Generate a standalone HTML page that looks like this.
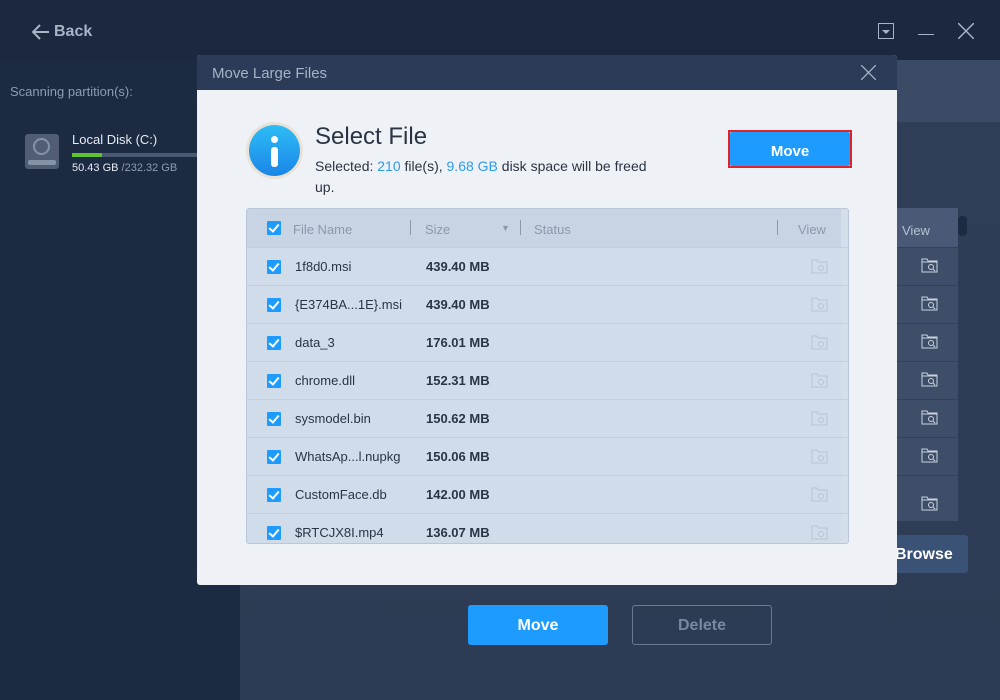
<!DOCTYPE html>
<html><head><meta charset="utf-8"><style>
*{margin:0;padding:0;box-sizing:border-box}
body{width:1000px;height:700px;overflow:hidden;background:#2e3c55;font-family:"Liberation Sans",sans-serif;position:relative}
.abs{position:absolute}
.top{left:0;top:0;width:1000px;height:60px;background:#1b2840}
.side{left:0;top:60px;width:240px;height:640px;background:#1c2a42}
.main{left:240px;top:60px;width:760px;height:640px;background:linear-gradient(#3b4a65 0,#3b4a65 62px,#2f3d57 62px,#2d3b54 100%)}
.t{white-space:nowrap}
.row{position:absolute;left:0;width:603px;height:38px;border-top:1px solid #c4d0df}
.cb{position:absolute;left:20px;top:12px;width:14px;height:14px;background:#1e9bff;border-radius:1px}
.cb:after{content:"";position:absolute;left:4px;top:1px;width:4px;height:8px;border:solid #fff;border-width:0 2px 2px 0;transform:rotate(40deg)}
.fn{position:absolute;left:48px;top:11px;font-size:13px;color:#2b3442}
.sz{position:absolute;left:179px;top:11px;font-size:13px;color:#2b3442;font-weight:bold}
.vi{position:absolute;left:564px;top:11px}
.rr{position:absolute;left:897px;width:61px;height:38px;border-top:1px solid #33425c;background:#3e4e69}
.rr svg{position:absolute;left:24px;top:10px}
</style></head><body>
<div class="abs top"></div>
<div class="abs side"></div>
<div class="abs main"></div>
<svg class="abs" style="left:32px;top:24px" width="18" height="16" viewBox="0 0 18 16"><path d="M17 8H2M8 1L1 8l7 7" fill="none" stroke="#a7b3c6" stroke-width="2"/></svg>
<div class="abs t" style="left:54px;top:23px;font-size:16px;font-weight:bold;color:#a7b3c6">Back</div>
<div class="abs" style="left:878px;top:23px;width:16px;height:16px;border:1px solid #a7b3c6"></div>
<div class="abs" style="left:882px;top:30px;border:4px solid transparent;border-top:4px solid #a7b3c6"></div>
<div class="abs" style="left:918px;top:34px;width:16px;height:1px;background:#a7b3c6"></div>
<svg class="abs" style="left:958px;top:23px" width="16" height="16"><path d="M0 0L16 16M16 0L0 16" stroke="#a7b3c6" stroke-width="1.5"/></svg>
<div class="abs t" style="left:10px;top:84px;font-size:13px;color:#8f9cb1">Scanning partition(s):</div>
<div class="abs" style="left:25px;top:134px;width:34px;height:35px;background:#505d74;border-radius:3px"></div>
<div class="abs" style="left:33px;top:138px;width:17px;height:17px;border:2px solid #8593a8;border-radius:50%"></div>
<div class="abs" style="left:28px;top:160px;width:28px;height:5px;background:#8593a8;border-radius:2px"></div>
<div class="abs t" style="left:72px;top:132px;font-size:13px;color:#e6ebf2">Local Disk (C:)</div>
<div class="abs" style="left:72px;top:153px;width:126px;height:4px;background:#4b5872"></div>
<div class="abs" style="left:72px;top:153px;width:30px;height:4px;background:#5fc32f"></div>
<div class="abs t" style="left:72px;top:162px;font-size:11px;color:#e6ebf2">50.43 GB <span style="color:#8f9cb1">/232.32 GB</span></div>

<div class="abs" style="left:897px;top:208px;width:61px;height:39px;background:#4a5a76"></div>
<div class="abs t" style="left:902px;top:223px;font-size:13px;color:#b6c2d4">View</div>
<div class="abs" style="left:958px;top:216px;width:9px;height:20px;background:#1c2a42;border-radius:4px"></div>
<div class="rr" style="top:247px"><svg width="17" height="15"><path d="M1 1h5l1 2h9v11H1z M1 4h15" fill="none" stroke="#c9d3e0"/><circle cx="10" cy="9" r="2.5" fill="none" stroke="#c9d3e0"/><path d="M12 11l2 2" stroke="#c9d3e0"/></svg></div>
<div class="rr" style="top:285px"><svg width="17" height="15"><path d="M1 1h5l1 2h9v11H1z M1 4h15" fill="none" stroke="#c9d3e0"/><circle cx="10" cy="9" r="2.5" fill="none" stroke="#c9d3e0"/><path d="M12 11l2 2" stroke="#c9d3e0"/></svg></div>
<div class="rr" style="top:323px"><svg width="17" height="15"><path d="M1 1h5l1 2h9v11H1z M1 4h15" fill="none" stroke="#c9d3e0"/><circle cx="10" cy="9" r="2.5" fill="none" stroke="#c9d3e0"/><path d="M12 11l2 2" stroke="#c9d3e0"/></svg></div>
<div class="rr" style="top:361px"><svg width="17" height="15"><path d="M1 1h5l1 2h9v11H1z M1 4h15" fill="none" stroke="#c9d3e0"/><circle cx="10" cy="9" r="2.5" fill="none" stroke="#c9d3e0"/><path d="M12 11l2 2" stroke="#c9d3e0"/></svg></div>
<div class="rr" style="top:399px"><svg width="17" height="15"><path d="M1 1h5l1 2h9v11H1z M1 4h15" fill="none" stroke="#c9d3e0"/><circle cx="10" cy="9" r="2.5" fill="none" stroke="#c9d3e0"/><path d="M12 11l2 2" stroke="#c9d3e0"/></svg></div>
<div class="rr" style="top:437px"><svg width="17" height="15"><path d="M1 1h5l1 2h9v11H1z M1 4h15" fill="none" stroke="#c9d3e0"/><circle cx="10" cy="9" r="2.5" fill="none" stroke="#c9d3e0"/><path d="M12 11l2 2" stroke="#c9d3e0"/></svg></div>
<div class="rr" style="top:475px;height:46px"><svg width="17" height="15" style="top:20px"><path d="M1 1h5l1 2h9v11H1z M1 4h15" fill="none" stroke="#c9d3e0"/><circle cx="10" cy="9" r="2.5" fill="none" stroke="#c9d3e0"/><path d="M12 11l2 2" stroke="#c9d3e0"/></svg></div>
<div class="abs t" style="left:880px;top:535px;width:88px;height:38px;background:#3a5275;border-radius:3px;color:#fff;font-size:16px;font-weight:bold;padding:11px 0 0 15px">Browse</div>
<div class="abs t" style="left:468px;top:605px;width:140px;height:40px;background:#1e9bff;border-radius:3px;color:#fff;font-size:16px;font-weight:bold;text-align:center;padding-top:12px">Move</div>
<div class="abs t" style="left:632px;top:605px;width:140px;height:40px;border:1px solid #6a7a94;border-radius:3px;color:#7888a2;font-size:16px;font-weight:bold;text-align:center;padding-top:11px">Delete</div>

<div class="abs" style="left:197px;top:55px;width:700px;height:530px;background:#eef1f6;border-radius:3px;overflow:hidden">
 <div class="abs" style="left:0;top:0;width:700px;height:35px;background:#2b3b58"></div>
 <div class="abs t" style="left:15px;top:10px;font-size:15px;color:#a7b3c6">Move Large Files</div>
 <svg class="abs" style="left:664px;top:10px" width="15" height="15"><path d="M0 0L15 15M15 0L0 15" stroke="#a7b3c6" stroke-width="1.3"/></svg>
 <div class="abs" style="left:49px;top:67px;width:57px;height:57px;border-radius:50%;background:#e8e2d8"></div>
 <div class="abs" style="left:52px;top:70px;width:51px;height:51px;border-radius:50%;background:linear-gradient(#2fbdf5,#1a85e8)"></div>
 <div class="abs" style="left:74px;top:81px;width:7px;height:7px;border-radius:50%;background:#fff"></div>
 <div class="abs" style="left:74px;top:92px;width:7px;height:20px;border-radius:3px;background:#fff"></div>
 <div class="abs t" style="left:118px;top:68px;font-size:24px;color:#2b3442">Select File</div>
 <div class="abs t" style="left:118px;top:101px;font-size:14px;color:#2b3442;line-height:21px">Selected: <span style="color:#2e9bf0">210</span> file(s), <span style="color:#2e9bf0">9.68 GB</span> disk space will be freed<br>up.</div>
 <div class="abs" style="left:531px;top:75px;width:124px;height:38px;border:2px solid #e0232b"></div>
 <div class="abs t" style="left:533px;top:77px;width:120px;height:34px;background:#1e9bff;border-radius:2px;color:#fff;font-size:15px;font-weight:bold;text-align:center;padding-top:11px">Move</div>
 <div class="abs" style="left:49px;top:153px;width:603px;height:336px;background:#d0dcea;border:1px solid #b9c7d8;border-radius:3px;overflow:hidden">
  <div class="abs" style="left:0;top:0;width:603px;height:38px;background:#c8d4e3"></div>
  <div class="cb" style="top:12px"></div>
  <div class="abs t" style="left:46px;top:13px;font-size:13px;color:#8b99ad">File Name</div>
  <div class="abs" style="left:163px;top:11px;width:1px;height:15px;background:#8b99ad"></div>
  <div class="abs t" style="left:178px;top:13px;font-size:13px;color:#8b99ad">Size</div>
  <div class="abs t" style="left:254px;top:14px;font-size:9px;color:#8b99ad">&#9660;</div>
  <div class="abs" style="left:273px;top:11px;width:1px;height:15px;background:#8b99ad"></div>
  <div class="abs t" style="left:287px;top:13px;font-size:13px;color:#8b99ad">Status</div>
  <div class="abs" style="left:530px;top:11px;width:1px;height:15px;background:#8b99ad"></div>
  <div class="abs t" style="left:551px;top:13px;font-size:13px;color:#8b99ad">View</div>
  <div class="abs" style="left:594px;top:0;width:9px;height:336px;background:#d5dfeb"></div>
  <div class="row" style="top:38px"><div class="cb"></div><div class="fn">1f8d0.msi</div><div class="sz">439.40 MB</div><svg class="vi" width="17" height="15"><path d="M1 1h5l1 2h9v11H1z" fill="none" stroke="#b6c3d3"/><circle cx="10" cy="9" r="2.5" fill="none" stroke="#b6c3d3"/></svg></div>
  <div class="row" style="top:76px"><div class="cb"></div><div class="fn">{E374BA...1E}.msi</div><div class="sz">439.40 MB</div><svg class="vi" width="17" height="15"><path d="M1 1h5l1 2h9v11H1z" fill="none" stroke="#b6c3d3"/><circle cx="10" cy="9" r="2.5" fill="none" stroke="#b6c3d3"/></svg></div>
  <div class="row" style="top:114px"><div class="cb"></div><div class="fn">data_3</div><div class="sz">176.01 MB</div><svg class="vi" width="17" height="15"><path d="M1 1h5l1 2h9v11H1z" fill="none" stroke="#b6c3d3"/><circle cx="10" cy="9" r="2.5" fill="none" stroke="#b6c3d3"/></svg></div>
  <div class="row" style="top:152px"><div class="cb"></div><div class="fn">chrome.dll</div><div class="sz">152.31 MB</div><svg class="vi" width="17" height="15"><path d="M1 1h5l1 2h9v11H1z" fill="none" stroke="#b6c3d3"/><circle cx="10" cy="9" r="2.5" fill="none" stroke="#b6c3d3"/></svg></div>
  <div class="row" style="top:190px"><div class="cb"></div><div class="fn">sysmodel.bin</div><div class="sz">150.62 MB</div><svg class="vi" width="17" height="15"><path d="M1 1h5l1 2h9v11H1z" fill="none" stroke="#b6c3d3"/><circle cx="10" cy="9" r="2.5" fill="none" stroke="#b6c3d3"/></svg></div>
  <div class="row" style="top:228px"><div class="cb"></div><div class="fn">WhatsAp...l.nupkg</div><div class="sz">150.06 MB</div><svg class="vi" width="17" height="15"><path d="M1 1h5l1 2h9v11H1z" fill="none" stroke="#b6c3d3"/><circle cx="10" cy="9" r="2.5" fill="none" stroke="#b6c3d3"/></svg></div>
  <div class="row" style="top:266px"><div class="cb"></div><div class="fn">CustomFace.db</div><div class="sz">142.00 MB</div><svg class="vi" width="17" height="15"><path d="M1 1h5l1 2h9v11H1z" fill="none" stroke="#b6c3d3"/><circle cx="10" cy="9" r="2.5" fill="none" stroke="#b6c3d3"/></svg></div>
  <div class="row" style="top:304px"><div class="cb"></div><div class="fn">$RTCJX8I.mp4</div><div class="sz">136.07 MB</div><svg class="vi" width="17" height="15"><path d="M1 1h5l1 2h9v11H1z" fill="none" stroke="#b6c3d3"/><circle cx="10" cy="9" r="2.5" fill="none" stroke="#b6c3d3"/></svg></div>
 </div>
</div>
</body></html>
